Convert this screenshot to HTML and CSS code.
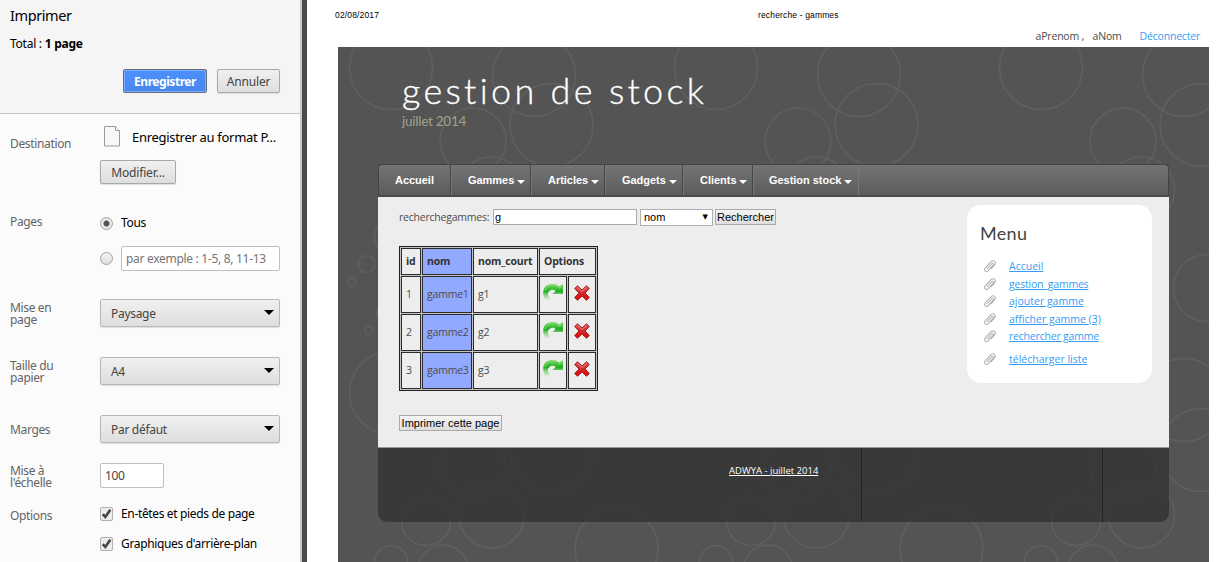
FILE: index.html
```html
<!DOCTYPE html>
<html lang="fr">
<head>
<meta charset="utf-8">
<title>recherche - gammes</title>
<link rel="stylesheet" href="styles.css">
</head>
<body>
<svg class="defs" aria-hidden="true">
  <defs>
    <linearGradient id="green" x1="0" y1="0" x2="0" y2="1"><stop offset="0" stop-color="#7bd967"/><stop offset=".45" stop-color="#20ad20"/><stop offset="1" stop-color="#b9eaa9" stop-opacity=".3"/></linearGradient>
    <linearGradient id="red" x1="0" y1="0" x2="0" y2="1"><stop offset="0" stop-color="#d95b5b"/><stop offset=".5" stop-color="#cf2a2a"/><stop offset="1" stop-color="#e80000"/></linearGradient>
    <symbol id="redo" viewBox="0 0 20 18"><path d="M2.500 17.500C-2 10 0 1 9.500 1c3 0 5 .8 6.700 2.500L20 1v10H9.500l3.200-3C11 6.500 8.500 6.300 6.500 8 4 10 4.500 13 7.500 16.500c-2-.3-4 0-5 1z" fill="url(#green)"/><path d="M2 8c1-4 4-6 7.300-6 3 0 5 1 7 3l2.700-2" fill="none" stroke="#8fe077" stroke-width="1"/></symbol>
    <symbol id="cross" viewBox="0 0 16 16"><path d="M3.500.8 8 5l4.500-4.200 2.800 2.700L11 8l4.300 4.500-2.800 2.700L8 11l-4.500 4.200-2.800-2.700L5 8 .7 3.500z" fill="url(#red)" stroke="#a51d1d" stroke-linejoin="round"/><path d="m3.500 2.500 4.500 4 4.500-4" fill="none" stroke="#e99" stroke-width=".8"/></symbol>
    <symbol id="clip" viewBox="0 0 13 13"><path d="m4 9 4.800-5.300c.9-1 2.300.2 1.400 1.300L5.300 10.700c-1.600 1.800-5 .1-3.200-2.500L8 1.700C10.500-.5 13.700 2 11.700 4.700L8 9" fill="none" stroke="#b0b0b0" stroke-width="1.100"/></symbol>
    <symbol id="check" viewBox="0 0 11 12"><path d="M1.800 6.200 4.300 9 9.300 1.800" fill="none" stroke="#444" stroke-width="2.600"/></symbol>
  </defs>
</svg>
<div class="window">
  <aside class="settings">
    <header class="summary">
      <h1>Imprimer</h1>
      <p>Total : <b>1 page</b></p>
      <div class="actions"><button class="btn primary">Enregistrer</button><button class="btn cancel">Annuler</button></div>
    </header>
    <div class="options">
      <section class="row destination"><span class="label">Destination</span>
        <div class="field"><div class="dest"><svg width="16" height="21" viewBox="0 0 16 21"><path d="M.5.500h11l4 4v15.500H.5z" fill="#f7f7f7" stroke="#999"/><path d="M11.500.500v4h4" fill="#fff" stroke="#999"/></svg><span>Enregistrer au format P...</span></div><button class="btn modify">Modifier...</button></div></section>
      <section class="row pages"><span class="label">Pages</span>
        <div class="field"><div class="choice"><i class="radio on"></i><span>Tous</span></div><div class="choice custom"><i class="radio"></i><span class="range">par exemple : 1-5, 8, 11-13</span></div></div></section>
      <section class="row sel"><span class="label">Mise en<br>page</span><div class="select">Paysage</div></section>
      <section class="row sel"><span class="label">Taille du<br>papier</span><div class="select">A4</div></section>
      <section class="row sel margins"><span class="label">Marges</span><div class="select">Par défaut</div></section>
      <section class="row scale"><span class="label">Mise à<br>l'échelle</span><div class="number">100</div></section>
      <section class="row checks"><span class="label">Options</span><div class="field"><div class="choice"><svg class="box"><use href="#check"/></svg><span>En-têtes et pieds de page</span></div><div class="choice"><svg class="box"><use href="#check"/></svg><span>Graphiques d'arrière-plan</span></div></div></section>
    </div>
  </aside>
  <main class="preview">
    <div class="sheet-head"><span class="date">02/08/2017</span><span class="doc">recherche - gammes</span></div>
    <div class="user"><span class="first">aPrenom</span><span class="comma">,</span><span class="surname">aNom</span><a>Déconnecter</a></div>
    <div class="site">
      <svg class="backdrop" width="871" height="515" aria-hidden="true">
        <defs><pattern id="bubbles" width="325" height="325" patternUnits="userSpaceOnUse">
          <g fill="none" stroke="#5f5f5f" stroke-width="1.500">
            <circle cx="53" cy="21" r="41.500"/><circle cx="53" cy="346" r="41.500"/>
            <circle cx="196" cy="28" r="41.500"/><circle cx="196" cy="353" r="41.500"/>
            <circle cx="213.500" cy="78" r="41.500"/>
            <circle cx="135" cy="94" r="33"/><circle cx="153.500" cy="143" r="33"/>
            <circle cx="88" cy="149" r="24.500"/><circle cx="278.500" cy="177" r="41.500"/>
            <circle cx="53" cy="190" r="16.500"/><circle cx="105" cy="198" r="25"/>
            <circle cx="28.500" cy="217" r="8.300"/><circle cx="13.500" cy="234.500" r="4"/>
            <circle cx="31" cy="283.500" r="4"/><circle cx="47" cy="266" r="8.300"/>
            <circle cx="219" cy="241" r="33.500"/>
          </g></pattern></defs>
        <rect width="871" height="515" fill="url(#bubbles)"/>
      </svg>
      <div class="container">
        <div class="logo"><h2>gestion de stock</h2><p>juillet 2014</p></div>
        <nav class="nav"><a class="n0">Accueil</a><a class="n1">Gammes<i></i></a><a class="n2">Articles<i></i></a><a class="n3">Gadgets<i></i></a><a class="n4">Clients<i></i></a><a class="n5">Gestion stock<i></i></a></nav>
        <div class="content">
          <div class="left">
            <div class="search"><label>recherchegammes:</label><span class="input">g</span><span class="combo">nom<b>▼</b></span><button class="plain find">Rechercher</button></div>
            <table>
              <tr class="head"><th class="cid">id</th><th class="nom">nom</th><th class="court">nom_court</th><th colspan="2">Options</th></tr>
              <tr><td>1</td><td class="nom">gamme1</td><td>g1</td><td class="ic"><svg class="redo"><use href="#redo"/></svg></td><td class="ic"><svg class="cross"><use href="#cross"/></svg></td></tr>
              <tr><td>2</td><td class="nom">gamme2</td><td>g2</td><td class="ic"><svg class="redo"><use href="#redo"/></svg></td><td class="ic"><svg class="cross"><use href="#cross"/></svg></td></tr>
              <tr><td>3</td><td class="nom">gamme3</td><td>g3</td><td class="ic"><svg class="redo"><use href="#redo"/></svg></td><td class="ic"><svg class="cross"><use href="#cross"/></svg></td></tr>
            </table>
            <button class="plain print">Imprimer cette page</button>
          </div>
          <div class="menu"><h3>Menu</h3>
            <ul>
              <li><svg><use href="#clip"/></svg><a>Accueil</a></li>
              <li><svg><use href="#clip"/></svg><a class="tight">gestion_gammes</a></li>
              <li><svg><use href="#clip"/></svg><a>ajouter gamme</a></li>
              <li><svg><use href="#clip"/></svg><a>afficher gamme (3)</a></li>
              <li><svg><use href="#clip"/></svg><a class="tight">rechercher gamme</a></li>
              <li class="last"><svg><use href="#clip"/></svg><a>télécharger liste</a></li>
            </ul></div>
        </div>
        <footer><div class="f1"><a>ADWYA - juillet 2014</a></div><div class="f2"></div><div class="f3"></div></footer>
      </div>
    </div>
  </main>
</div>
</body>
</html>
```
FILE: styles.css
```css
* { box-sizing: border-box; }
body { margin: 0; overflow: hidden; background: #fff; }
h1, h2, h3, p, ul { margin: 0; padding: 0; font-weight: 400; }
button { margin: 0; padding: 0; font: inherit; }
svg { display: block; flex: none; }
.defs { position: absolute; width: 0; height: 0; }
.window { display: flex; width: 1218px; height: 562px; overflow: hidden; }

.settings { flex: none; width: 307px; border-right: 5px solid #474a4e; background: #fbfbfb; box-shadow: inset -2px 0 #c8c9ca; font: 12px/16px "Noto Sans", "Open Sans", sans-serif; color: #000; white-space: nowrap; letter-spacing: -.35px; }
.summary { width: 300px; height: 114px; padding: 7px 20px 0 10px; background: #f5f5f5; border-bottom: 1px solid #c8c8c8; }
.summary h1 { font-size: 14.500px; line-height: 17px; letter-spacing: -.4px; }
.summary p { margin-top: 12px; letter-spacing: -.25px; }
.actions { display: flex; justify-content: flex-end; gap: 10px; margin-top: 17px; }
.btn { height: 24px; padding-top: 1px; border: 1px solid #a9a9a9; border-radius: 2px; background: linear-gradient(#f0f0f0, #dedede); color: #444; letter-spacing: -.15px; box-shadow: 0 1px 1px #ddd; }
.primary { width: 84px; background: linear-gradient(#4d90fe, #4787ed); border-color: #666d78; color: #fff; font-weight: 700; letter-spacing: -.45px; box-shadow: inset 0 0 0 1px #79adff; }
.cancel { width: 63px; }
.row { display: flex; }
.label { flex: none; width: 90px; color: #646464; line-height: 12px; }
.options { padding-left: 10px; }
.destination { height: 88px; padding-top: 12px; }
.destination .label { padding-top: 12px; }
.dest { display: flex; height: 34px; padding-left: 4px; gap: 12px; }
.dest span { padding-top: 3px; font-size: 13px; letter-spacing: -.3px; }
.modify { width: 76px; }
.pages { height: 97px; padding-top: 12px; }
.pages .label { padding-top: 2px; }
.choice { display: flex; align-items: center; gap: 8px; height: 18px; }
.custom { margin-top: 13px; height: 26px; }
.radio { width: 13px; height: 13px; border: 1px solid #a0a0a0; border-radius: 50%; background: linear-gradient(#f3f3f3, #dedede); }
.radio.on { background: radial-gradient(circle, #555 2.500px, #e9e9e9 3.500px); }
.range, .number { border: 1px solid #bfbfbf; border-radius: 2px; background: #fff; height: 25px; padding: 4px 4px 0; color: #757575; }
.range { width: 159px; letter-spacing: -.3px; }
.sel { height: 58px; }
.sel .label { padding-top: 3px; }
.margins .label { padding-top: 9px; }
.select { display: flex; justify-content: space-between; align-items: center; width: 180px; height: 28px; padding: 2px 5px 0 10px; border: 1px solid #b8b8b8; border-radius: 2px; background: linear-gradient(#f0f0f0, #dedede); box-shadow: 0 1px 1px #ddd; color: #444; letter-spacing: -.3px; }
.select::after { content: ""; border: 5px solid transparent; border-top-color: #000; border-bottom: 0; margin-top: -3px; }
.margins { height: 50px; }
.scale { height: 39px; margin-top: -2px; }
.scale .label { padding-top: 2px; }
.number { width: 64px; color: #444; }
.checks .label { padding-top: 8px; }
.checks .choice { height: 30px; margin-top: 0; }
.checks .field { margin-top: -3px; }
.box { width: 13px; height: 14px; border: 1px solid #b0b0b0; border-radius: 2px; background: #ececec; }

.preview { flex: none; width: 911px; background: #fff; }
.sheet-head { display: flex; height: 29px; padding: 10px 0 0 28px; font: 8.500px/11px "Liberation Sans", sans-serif; letter-spacing: .15px; white-space: nowrap; }
.date { width: 423px; }
.user { display: flex; justify-content: flex-end; height: 18px; padding-right: 18px; font: 10.500px/15px "Open Sans", sans-serif; color: #4c4c4c; letter-spacing: -.2px; }
.first { width: 41px; }
.comma { width: 16px; padding-left: 5px; }
.surname { width: 47px; }
.user a, .menu a { color: #389cf5; }
.site { position: relative; width: 871px; height: 515px; margin-left: 31px; background: #545454; overflow: hidden; }
.backdrop { position: absolute; left: 0; top: 0; }
.container { position: relative; width: 791px; margin-left: 40px; }
.logo { height: 117px; padding: 22px 0 0 24px; font-family: Lato, sans-serif; white-space: nowrap; }
.logo h2 { color: #fff; font-size: 36px; line-height: 42px; font-weight: 300; letter-spacing: 3.300px; -webkit-text-stroke: .35px #fff; }
.logo p { margin-top: 2px; color: #a0a28c; font-size: 13.500px; line-height: 16px; font-weight: 400; letter-spacing: -.25px; }
.nav { display: flex; height: 33px; border: 1px solid #444; border-bottom: 2px solid #4b4b4b; border-radius: 4px 4px 0 0; background: linear-gradient(#747474, #5c5c5c); font: 700 11px/31px "Liberation Sans", sans-serif; color: #fff; }
.nav a { display: flex; align-items: center; padding-left: 16px; border-right: 1px solid #787878; box-shadow: inset -1px 0 #444; white-space: nowrap; letter-spacing: -.03px; }
.nav i { margin: 3px 0 0 3px; border: 4px solid transparent; border-top-color: #fff; border-bottom: 0; }
.n0 { width: 73px; } .n1 { width: 80px; } .n2 { width: 74px; } .n3 { width: 78px; } .n4 { width: 70px; } .n5 { width: 105px; }
.nav .n5 { box-shadow: none; padding-left: 15px; }
.content { display: flex; justify-content: space-between; height: 250px; padding: 8px 17px 0 21px; background: #ededed; font: 10.500px/16px "Open Sans", sans-serif; color: #4c4c4c; }
.search { display: flex; height: 24px; padding-top: 4px; font: 11px/15px "Liberation Sans", sans-serif; color: #000; }
.search label { width: 94px; color: #4c4c4c; font: 10.500px/16px "Open Sans", sans-serif; letter-spacing: -.22px; }
.input { width: 144px; height: 16px; border: 1px solid #aaa; background: #fff; padding-left: 1px; }
.combo { display: flex; justify-content: space-between; width: 73px; height: 17px; margin: 0 2px 0 3px; padding: 0 4px 0 3px; border: 1px solid #b0b0b0; background: #fff; }
.combo b { font: 7px/14px "DejaVu Sans", sans-serif; }
.plain { height: 16px; border: 1px solid #aaa; background: linear-gradient(#f5f5f5, #ddd); color: #000; font: 11px/13px "Liberation Sans", sans-serif; white-space: nowrap; }
.find { width: 61px; }
.print { width: 103px; margin-top: 24px; display: block; }
table { width: 199px; height: 144px; margin-top: 17px; border: 1px solid #222; border-collapse: separate; border-spacing: 1px; table-layout: fixed; background: #c4c4c4; }
th, td { height: 37px; padding: 0 0 1px 4px; border: 1px solid #2b2b2b; background: #ededed; text-align: left; font-size: 10.500px; line-height: 14px; white-space: nowrap; letter-spacing: -.2px; }
th { color: #333; height: 27px; }
.cid { width: 20px; } .nom { width: 50px; background: #91a9ff; } .court { width: 65px; }
td.ic { padding: 0 0 0 3px; vertical-align: top; }
.redo { width: 20px; height: 18px; margin-top: 6px; }
.cross { width: 16px; height: 16px; margin: 8px 0 0 2px; }
.menu { width: 185px; height: 178px; padding: 14px 13px; border-radius: 14px; background: #fff; }
.menu h3 { color: #444; font: 400 18px/28px Lato, sans-serif; letter-spacing: .3px; }
.menu ul { list-style: none; margin-top: 11px; }
.menu li { display: flex; gap: 12px; height: 17.600px; padding-left: 4px; line-height: 17px; }
.menu li svg { width: 13px; height: 13px; margin: 2px 1px 0 -1px; }
.menu .last { margin-top: 5px; }
.menu a { text-decoration: underline; white-space: nowrap; }
.menu .tight { letter-spacing: -.2px; }
footer { display: flex; height: 75px; background: rgba(50, 50, 50, .78); border-top: 1px solid #999; border-radius: 0 0 9px 9px; font: 9.500px/14px "Open Sans", sans-serif; }
.f1 { width: 484px; padding: 16px 0 0 351px; border-right: 1px solid #252525; }
.f1 a { color: #fff; text-decoration: underline; white-space: nowrap; }
.f2 { width: 241px; border-right: 1px solid #252525; }
```
